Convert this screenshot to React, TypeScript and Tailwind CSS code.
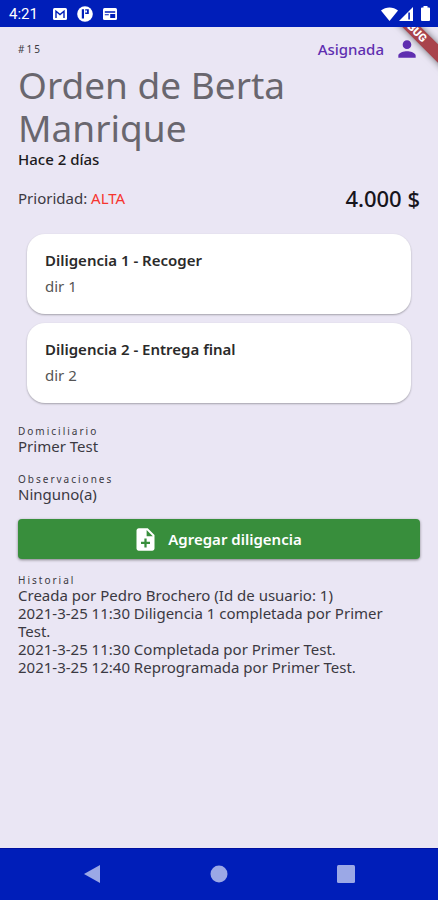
import type { ReactNode } from "react";

type Errand = { title: string; address: string };

const errands: Errand[] = [
  { title: "Diligencia 1 - Recoger", address: "dir 1" },
  { title: "Diligencia 2 - Entrega final", address: "dir 2" },
];

const history: string[] = [
  "Creada por Pedro Brochero (Id de usuario: 1)",
  "2021-3-25 11:30 Diligencia 1 completada por Primer Test.",
  "2021-3-25 11:30 Completada por Primer Test.",
  "2021-3-25 12:40 Reprogramada por Primer Test.",
];

function StatusBar() {
  return (
    <header className="flex h-[27px] shrink-0 items-center justify-between bg-[#001eb9] pr-2 pl-[9px] text-white">
      <div className="flex items-center gap-[11px]">
        <span className="mr-1 font-[Roboto,sans-serif] text-[15px] leading-[18px]">4:21</span>
        <svg className="h-3 w-[14px]" viewBox="0 0 14 12" aria-hidden="true">
          <rect width="14" height="12" rx="1.5" fill="currentColor" />
          <path d="M3 10V3.2l4 3.3 4-3.3V10" fill="none" stroke="#001eb9" strokeWidth="1.4" />
        </svg>
        <svg className="-mx-px size-4" viewBox="0 0 16 16" aria-hidden="true">
          <circle cx="8" cy="8" r="7.8" fill="currentColor" />
          <path d="M4.800 3.200h2.200v9.300H4.800zM8.200 3.200h3.600v4.800H8.200z" fill="#001eb9" />
          <path d="M8.200 4.600h1.800v1.800H8.200z" fill="currentColor" />
        </svg>
        <svg className="h-3 w-[14px]" viewBox="0 0 14 12" aria-hidden="true">
          <rect width="14" height="12" rx="1.5" fill="currentColor" />
          <path d="M1.800 3.300h10.400v1.500H1.800zM7.200 6h5v4h-5zM1.800 6.300h4v1h-4z" fill="#001eb9" />
        </svg>
      </div>
      <div className="flex items-center">
        <svg className="h-[14px] w-[17px]" viewBox="0 0 17 14" aria-hidden="true">
          <path d="M0 3.600C4.800-.5 12.200-.5 17 3.600L8.500 14z" fill="currentColor" />
        </svg>
        <svg className="ml-px h-[14px] w-[14px]" viewBox="0 0 14 14" aria-hidden="true">
          <path d="M0 14 14 0v14z" fill="currentColor" />
          <path d="M9.300 5.500h1.600v7H9.300z" fill="#001eb9" />
        </svg>
        <svg className="ml-2 h-[15px] w-[9px]" viewBox="0 0 9 15" aria-hidden="true">
          <path d="M2.500 0h4v1.500H8q1 0 1 1V14q0 1-1 1H1q-1 0-1-1V2.500q0-1 1-1h1.500z" fill="currentColor" />
        </svg>
      </div>
    </header>
  );
}

function DebugRibbon() {
  return (
    <div className="pointer-events-none absolute top-0 right-0 size-16 overflow-hidden" aria-hidden="true">
      <div className="absolute top-[7px] -right-[37px] flex h-[13px] w-[100px] rotate-45 items-center justify-center bg-[#a8434c] pr-9 font-[Roboto,sans-serif] text-[11px] leading-none font-black text-white shadow-[0_0_7px_rgba(0,0,0,0.55)]">
        DEBUG
      </div>
    </div>
  );
}

function Section({ label, children }: { label: string; children: ReactNode }) {
  return (
    <section>
      <h2 className="text-[10px] leading-3 tracking-[2px]">{label}</h2>
      {children}
    </section>
  );
}

function NavigationBar() {
  return (
    <nav className="flex h-[52px] shrink-0 items-center justify-between bg-[#001eb9] px-[83px] text-[#9ba8e6] shadow-[inset_0_1px_0_#0010a0]">
      <button type="button" aria-label="Atrás" className="flex">
        <svg className="size-[18px]" viewBox="0 0 18 18" aria-hidden="true">
          <path d="M1 9 17 0v18z" fill="currentColor" />
        </svg>
      </button>
      <button type="button" aria-label="Inicio" className="flex">
        <svg className="size-[18px]" viewBox="0 0 18 18" aria-hidden="true">
          <circle cx="9" cy="9" r="8.500" fill="currentColor" />
        </svg>
      </button>
      <button type="button" aria-label="Recientes" className="flex">
        <svg className="size-[18px]" viewBox="0 0 18 18" aria-hidden="true">
          <rect width="18" height="18" rx="1.500" fill="currentColor" />
        </svg>
      </button>
    </nav>
  );
}

export default function App() {
  return (
    <div className="flex min-h-screen flex-col bg-[#eae6f4] font-['Noto_Sans',sans-serif] text-[#3b3942]">
      <StatusBar />
      <main className="relative flex-1 px-[18px] pt-[10px] text-[15px] leading-[18px]">
        <div className="flex h-6 items-center justify-between">
          <span className="text-[10px] leading-3 tracking-[2px]">#15</span>
          <div className="flex items-center gap-[10px] text-[#5f2eb0]">
            <span className="font-medium">Asignada</span>
            <svg className="size-[26px]" viewBox="0 0 24 24" aria-hidden="true">
              <path d="M12 12c2.210 0 4-1.790 4-4s-1.790-4-4-4-4 1.790-4 4 1.790 4 4 4zm0 2c-2.670 0-8 1.340-8 4v2h16v-2c0-2.660-5.330-4-8-4z" fill="currentColor" />
            </svg>
          </div>
        </div>
        <h1 className="pt-[2px] text-[37px] leading-[43px] text-[#69666e]">Orden de Berta Manrique</h1>
        <p className="mt-px font-medium text-[#1c1a20]">Hace 2 días</p>
        <div className="mt-4 flex h-7 items-center justify-between">
          <p>
            Prioridad: <span className="text-[#f6352f]">ALTA</span>
          </p>
          <p className="text-[22px] leading-7 font-medium text-[#17151c]">4.000 $</p>
        </div>
        <ul className="mx-[9px] mt-[22px] flex flex-col gap-[9px]">
          {errands.map((errand) => (
            <li
              key={errand.title}
              className="rounded-[18px] bg-white px-[18px] pt-[17px] pb-[19px] shadow-[0_1px_2px_rgba(0,0,0,0.3)]"
            >
              <h3 className="font-semibold text-[#2a2a2a]">{errand.title}</h3>
              <p className="mt-2 text-[#555555]">{errand.address}</p>
            </li>
          ))}
        </ul>
        <div className="mt-[22px] flex flex-col gap-[18px]">
          <Section label="Domiciliario">
            <p>Primer Test</p>
          </Section>
          <Section label="Observaciones">
            <p>Ninguno(a)</p>
          </Section>
        </div>
        <button
          type="button"
          className="mt-4 flex h-10 w-full items-center justify-center gap-[9px] rounded bg-[#388e3c] pr-1 font-semibold text-white shadow-[0_1px_3px_rgba(0,0,0,0.45)]"
        >
          <svg className="size-[27px]" viewBox="0 0 24 24" aria-hidden="true">
            <path d="M14 2H6c-1.100 0-1.990.9-1.990 2L4 20c0 1.100.890 2 1.990 2H18c1.100 0 2-.9 2-2V8l-6-6zm2 14h-3v3h-2v-3H8v-2h3v-3h2v3h3v2zm-3-7V3.500L18.500 9H13z" fill="currentColor" />
          </svg>
          Agregar diligencia
        </button>
        <div className="mt-[15px] pr-4 pb-4">
          <Section label="Historial">
            {history.map((entry) => (
              <p key={entry}>{entry}</p>
            ))}
          </Section>
        </div>
        <DebugRibbon />
      </main>
      <NavigationBar />
    </div>
  );
}
